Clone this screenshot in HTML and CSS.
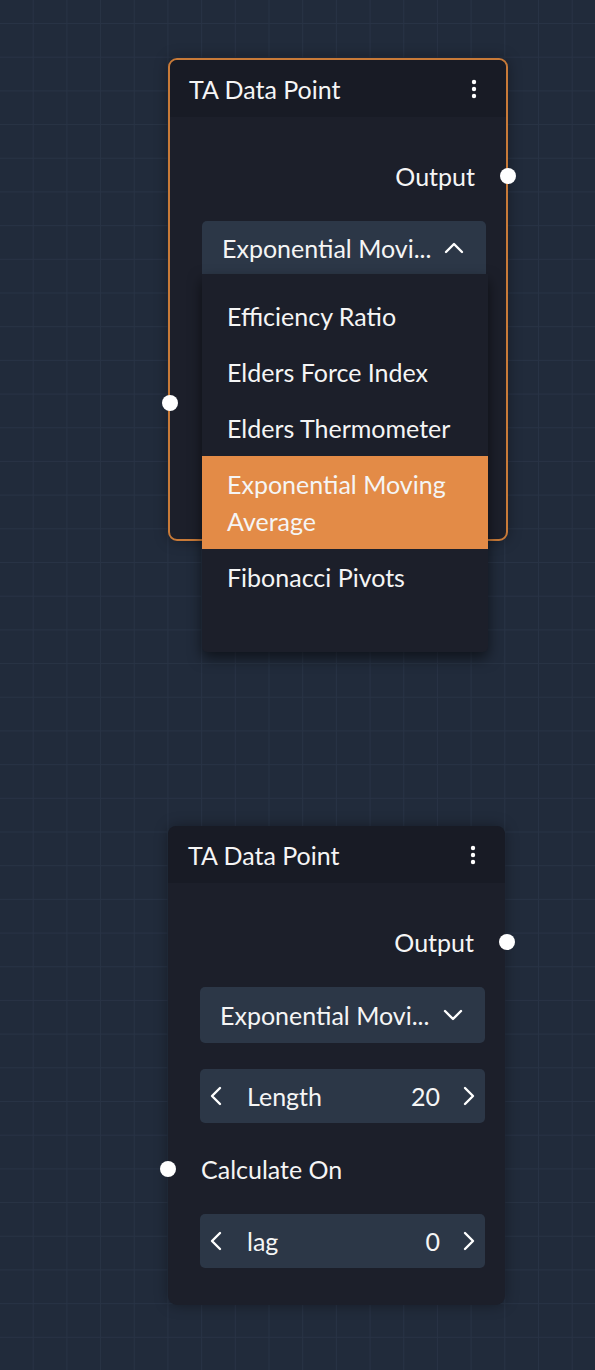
FILE: index.html
```html
<!DOCTYPE html>
<html>
<head>
<meta charset="utf-8">
<link rel="stylesheet" href="styles.css">
</head>
<body>
<div class="canvas">
  <div class="node node-selected node-a">
    <div class="node-header">
      <span class="node-title">TA Data Point</span>
      <svg class="kebab" width="6" height="20" viewBox="0 0 6 20"><circle cx="3" cy="3" r="2.2" fill="#fff"/><circle cx="3" cy="10" r="2.2" fill="#fff"/><circle cx="3" cy="17" r="2.2" fill="#fff"/></svg>
    </div>
    <div class="node-body">
      <div class="port-row port-out">
        <span>Output</span>
        <span class="dot dot-out"></span>
      </div>
      <div class="select-wrap">
        <div class="select select-open">
          <span class="select-text">Exponential Movi...</span>
          <svg class="chev" width="20" height="12" viewBox="0 0 20 12"><path d="M2 10 L10 2 L18 10" fill="none" stroke="#fff" stroke-width="2.4" stroke-linecap="round" stroke-linejoin="round"/></svg>
        </div>
        <div class="menu">
          <div class="menu-list">
            <div class="menu-item">Efficiency Ratio</div>
            <div class="menu-item">Elders Force Index</div>
            <div class="menu-item">Elders Thermometer</div>
            <div class="menu-item menu-item-active">Exponential Moving Average</div>
            <div class="menu-item">Fibonacci Pivots</div>
            <div class="menu-item">Fisher Transform</div>
          </div>
        </div>
      </div>
      <div class="stepper">
        <svg class="arrow" width="14" height="20" viewBox="0 0 14 20"><path d="M11 2 L3 10 L11 18" fill="none" stroke="#fff" stroke-width="2.4" stroke-linecap="round" stroke-linejoin="round"/></svg>
        <span class="stepper-label">Length</span>
        <span class="stepper-value">20</span>
        <svg class="arrow" width="14" height="20" viewBox="0 0 14 20"><path d="M3 2 L11 10 L3 18" fill="none" stroke="#fff" stroke-width="2.4" stroke-linecap="round" stroke-linejoin="round"/></svg>
      </div>
      <div class="port-row port-in">
        <span class="dot dot-in"></span>
        <span>Calculate On</span>
      </div>
      <div class="stepper">
        <svg class="arrow" width="14" height="20" viewBox="0 0 14 20"><path d="M11 2 L3 10 L11 18" fill="none" stroke="#fff" stroke-width="2.4" stroke-linecap="round" stroke-linejoin="round"/></svg>
        <span class="stepper-label">lag</span>
        <span class="stepper-value">0</span>
        <svg class="arrow" width="14" height="20" viewBox="0 0 14 20"><path d="M3 2 L11 10 L3 18" fill="none" stroke="#fff" stroke-width="2.4" stroke-linecap="round" stroke-linejoin="round"/></svg>
      </div>
    </div>
  </div>

  <div class="node node-b">
    <div class="node-header">
      <span class="node-title">TA Data Point</span>
      <svg class="kebab" width="6" height="20" viewBox="0 0 6 20"><circle cx="3" cy="3" r="2.2" fill="#fff"/><circle cx="3" cy="10" r="2.2" fill="#fff"/><circle cx="3" cy="17" r="2.2" fill="#fff"/></svg>
    </div>
    <div class="node-body">
      <div class="port-row port-out">
        <span>Output</span>
        <span class="dot dot-out"></span>
      </div>
      <div class="select">
        <span class="select-text">Exponential Movi...</span>
        <svg class="chev" width="20" height="12" viewBox="0 0 20 12"><path d="M2 2 L10 10 L18 2" fill="none" stroke="#fff" stroke-width="2.4" stroke-linecap="round" stroke-linejoin="round"/></svg>
      </div>
      <div class="stepper">
        <svg class="arrow" width="14" height="20" viewBox="0 0 14 20"><path d="M11 2 L3 10 L11 18" fill="none" stroke="#fff" stroke-width="2.4" stroke-linecap="round" stroke-linejoin="round"/></svg>
        <span class="stepper-label">Length</span>
        <span class="stepper-value">20</span>
        <svg class="arrow" width="14" height="20" viewBox="0 0 14 20"><path d="M3 2 L11 10 L3 18" fill="none" stroke="#fff" stroke-width="2.4" stroke-linecap="round" stroke-linejoin="round"/></svg>
      </div>
      <div class="port-row port-in">
        <span class="dot dot-in"></span>
        <span>Calculate On</span>
      </div>
      <div class="stepper">
        <svg class="arrow" width="14" height="20" viewBox="0 0 14 20"><path d="M11 2 L3 10 L11 18" fill="none" stroke="#fff" stroke-width="2.4" stroke-linecap="round" stroke-linejoin="round"/></svg>
        <span class="stepper-label">lag</span>
        <span class="stepper-value">0</span>
        <svg class="arrow" width="14" height="20" viewBox="0 0 14 20"><path d="M3 2 L11 10 L3 18" fill="none" stroke="#fff" stroke-width="2.4" stroke-linecap="round" stroke-linejoin="round"/></svg>
      </div>
    </div>
  </div>
</div>
</body>
</html>
```
FILE: styles.css
```css
html, body {
  margin: 0;
  padding: 0;
}
body {
  font-family: Lato, "Noto Sans", sans-serif;
  color: #f5f5f5;
  background: #212b3b;
}
.canvas {
  position: relative;
  width: 595px;
  height: 1370px;
  overflow: hidden;
  background-color: #212b3b;
  background-image:
    linear-gradient(to right, #283345 1px, transparent 1px),
    linear-gradient(to bottom, #283345 1px, transparent 1px);
  background-size: 33.7px 33.7px;
  background-position: -1px 23px;
}
.node {
  position: absolute;
  left: 168px;
  width: 337px;
  box-sizing: border-box;
  background: #1c1f2a;
  border-radius: 9px;
  box-shadow: 0 0 14px rgba(0, 0, 0, 0.35);
}
.node-a {
  top: 58px;
  width: 340px;
  border: 2px solid #c87a38;
}
.node-b {
  top: 826px;
}
.node-header {
  height: 57px;
  display: flex;
  align-items: center;
  justify-content: space-between;
  padding: 0 29px 0 20px;
  background: #181b25;
  border-radius: 8px 8px 0 0;
}
.node-a .node-header {
  padding-left: 19px;
}
.node-title {
  font-size: 25px;
}
.kebab {
  display: block;
}
.node-body {
  display: flex;
  flex-direction: column;
  gap: 26px;
  padding: 40px 20px 37px 32px;
}
.port-row {
  position: relative;
  height: 38px;
  display: flex;
  align-items: center;
  font-size: 25px;
}
.port-out {
  justify-content: flex-end;
  padding-right: 11px;
}
.port-in {
  height: 39px;
  padding-left: 1px;
}
.dot {
  position: absolute;
  top: 50%;
  margin-top: -8px;
  width: 16px;
  height: 16px;
  border-radius: 50%;
  background: #ffffff;
}
.dot-out {
  right: -30px;
}
.dot-in {
  left: -40px;
}
.select-wrap {
  position: relative;
  height: 56px;
}
.select {
  height: 56px;
  box-sizing: border-box;
  display: flex;
  align-items: center;
  justify-content: space-between;
  padding: 0 22px 0 20px;
  background: #2c3747;
  border-radius: 5px;
  font-size: 25px;
}
.select-open {
  height: 53px;
  border-radius: 5px 5px 0 0;
}
.chev {
  display: block;
}
.menu {
  position: absolute;
  z-index: 5;
  top: 53px;
  left: 0;
  width: 286px;
  box-sizing: border-box;
  padding: 14px 0 28px;
  background: #1c1f2a;
  border-radius: 0 0 5px 5px;
  box-shadow: 0 6px 14px rgba(0, 0, 0, 0.55);
}
.menu-list {
  height: 336px;
  overflow: hidden;
}
.menu-item {
  padding: 9.5px 16px 9.5px 25px;
  line-height: 37px;
  font-size: 25px;
}
.menu-item-active {
  background: #e38b47;
}
.stepper {
  height: 54px;
  box-sizing: border-box;
  display: flex;
  align-items: center;
  padding: 0 9px 0 9px;
  background: #2c3747;
  border-radius: 5px;
  font-size: 25px;
}
.arrow {
  display: block;
}
.stepper-label {
  flex: 1;
  padding-left: 24px;
}
.stepper-value {
  padding-right: 22px;
}
```
